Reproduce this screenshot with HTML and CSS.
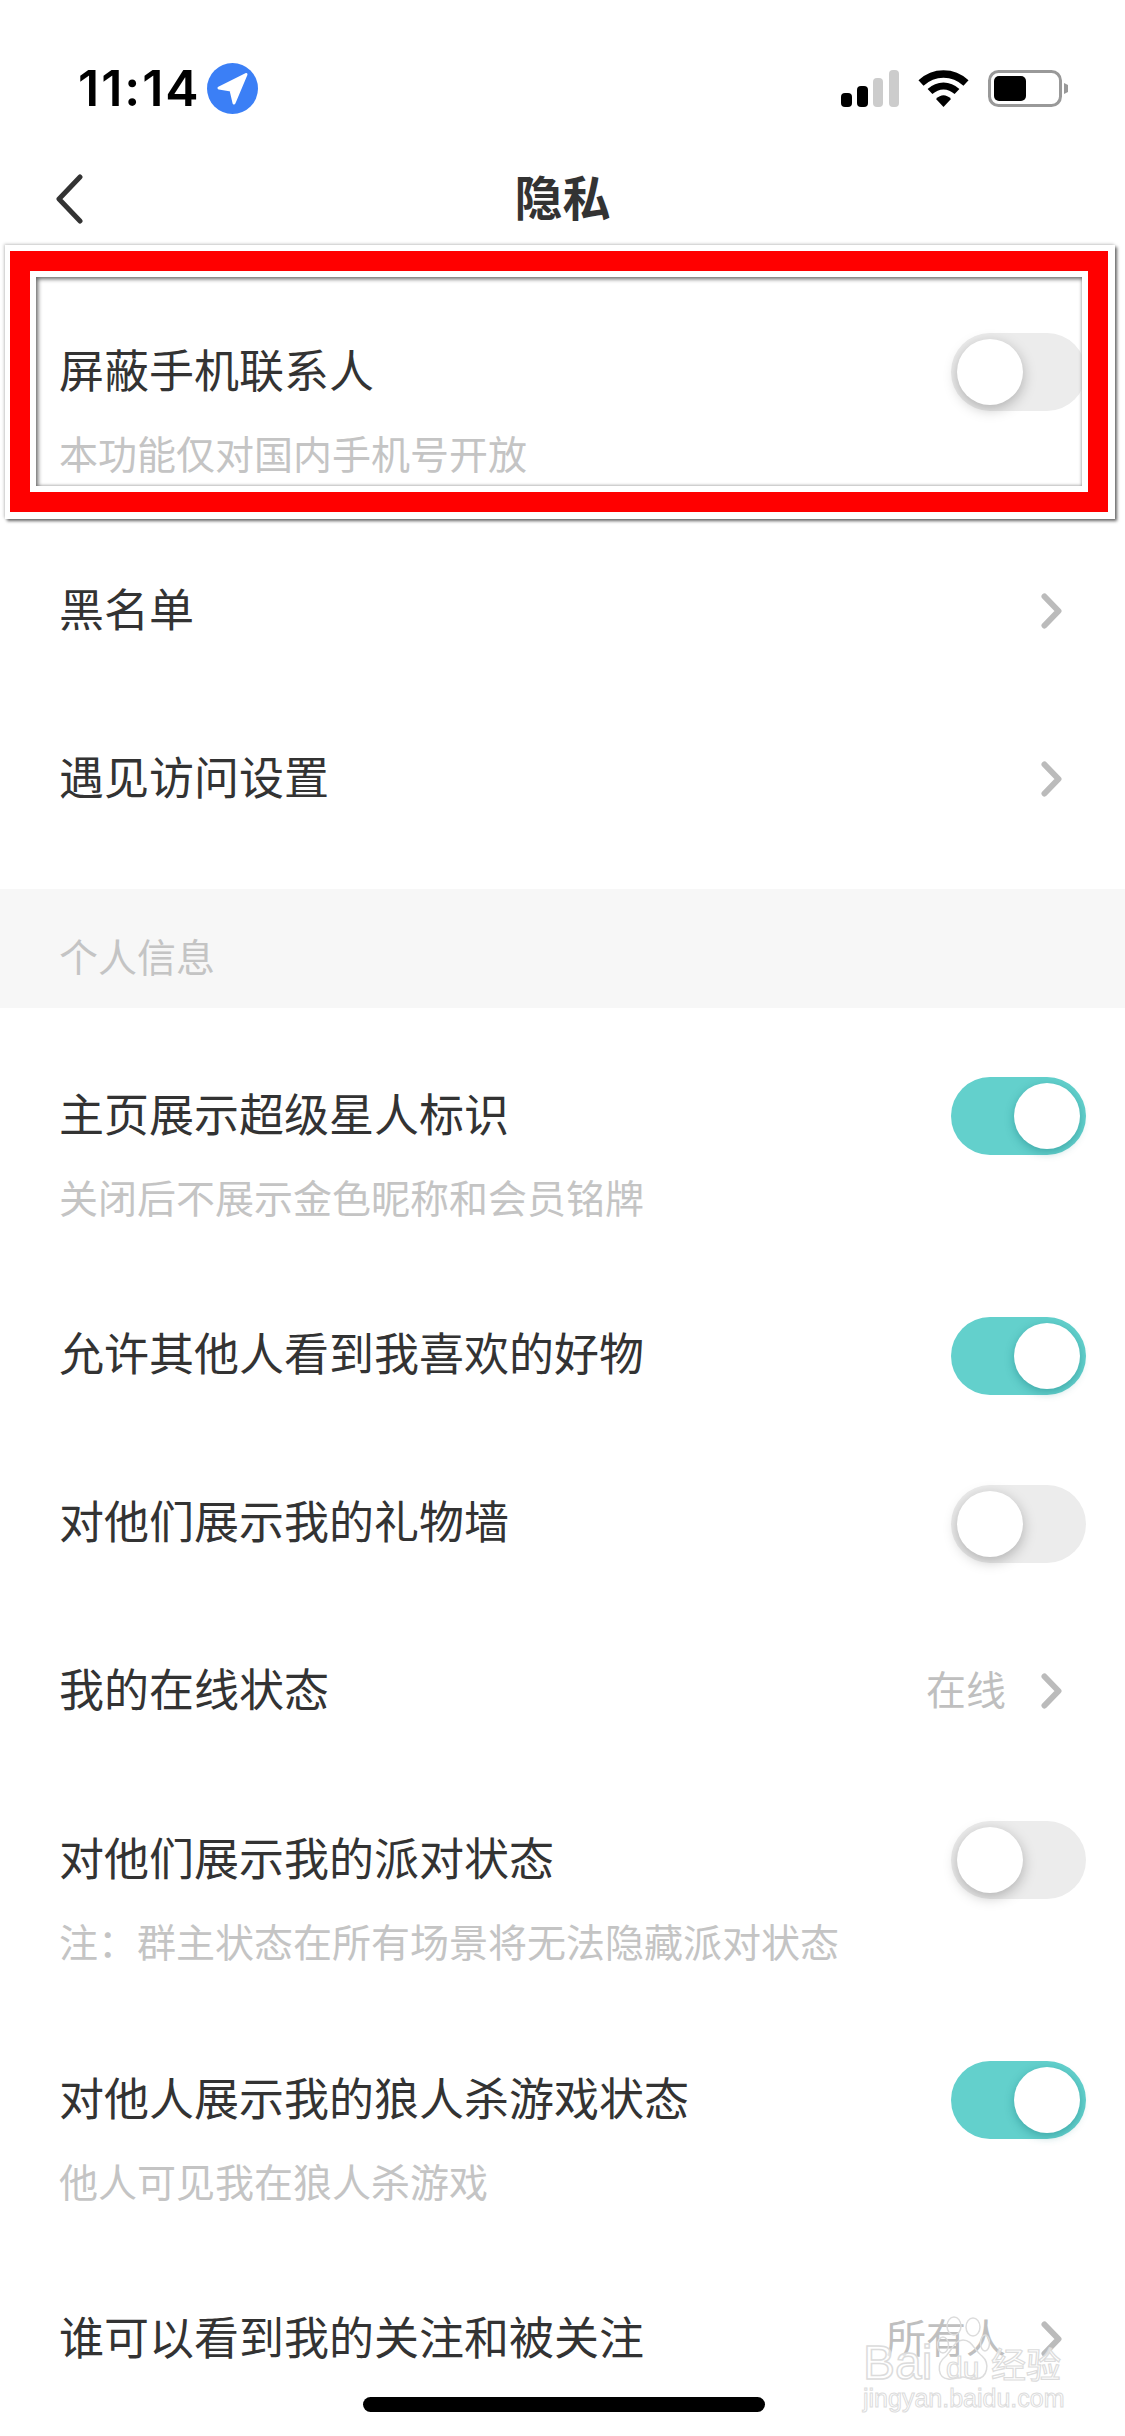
FILE: index.html
```html
<!DOCTYPE html>
<html lang="zh-CN">
<head>
    <meta charset="UTF-8">
    <meta name="viewport" content="width=device-width, initial-scale=1.0">
    <title>隐私</title>
    <link rel="stylesheet" href="styles.css">
</head>
<body>
    <div class="phone">
        <div class="status-bar">
            <div class="status-left">
                <span class="time">11:14</span>
                <svg class="loc" width="51" height="51" viewBox="0 0 51 51">
                    <circle cx="25.5" cy="25.5" r="25.5" fill="#3b7ff6"/>
                    <path d="M39 11.5 L12 25 L24 27 L27 40 Z" fill="#fff" stroke="#fff" stroke-width="3" stroke-linejoin="round"/>
                </svg>
            </div>
            <div class="status-right">
                <svg class="signal" width="58" height="37" viewBox="0 0 58 37">
                    <rect x="0" y="23" width="11" height="14" rx="4" fill="#000"/>
                    <rect x="16" y="16" width="11" height="21" rx="4" fill="#000"/>
                    <rect x="32" y="8" width="10" height="29" rx="4" fill="#ccc"/>
                    <rect x="48" y="0" width="10" height="37" rx="4" fill="#ccc"/>
                </svg>
                <svg class="wifi" width="51" height="37" viewBox="0 0 51 37">
                    <path d="M3 13 C16 1 35 1 48 13" fill="none" stroke="#000" stroke-width="7.5"/>
                    <path d="M12 21.5 C20 14 31 14 39 21.5" fill="none" stroke="#000" stroke-width="7"/>
                    <path d="M18 29 C23 24 28 24 33 29 L25.5 37 Z" fill="#000"/>
                </svg>
                <svg class="battery" width="80" height="37" viewBox="0 0 80 37">
                    <rect x="1.5" y="1.5" width="71" height="34" rx="9" fill="none" stroke="#999" stroke-width="3"/>
                    <rect x="6" y="6" width="32" height="25" rx="5" fill="#000"/>
                    <path d="M76 13 L80 15 L80 22 L76 24 Z" fill="#999"/>
                </svg>
            </div>
        </div>

        <div class="nav">
            <svg class="back" width="32" height="50" viewBox="0 0 32 50">
                <path d="M27 3 L6 25 L27 47" fill="none" stroke="#333" stroke-width="5" stroke-linecap="round" stroke-linejoin="round"/>
            </svg>
            <span class="nav-title">隐私</span>
        </div>

        <div class="group group-top">
            <div class="row row-tall">
                <div class="row-text">
                    <div class="row-title">屏蔽手机联系人</div>
                    <div class="row-sub">本功能仅对国内手机号开放</div>
                </div>
                <div class="switch"><i class="knob"></i></div>
            </div>
            <div class="row">
                <div class="row-title">黑名单</div>
                <svg class="chevron" width="21" height="36" viewBox="0 0 21 36"><path d="M3.5 3.5 L17.5 18 L3.5 32.5" fill="none" stroke="#bbb" stroke-width="6" stroke-linecap="round" stroke-linejoin="round"/></svg>
            </div>
            <div class="row">
                <div class="row-title">遇见访问设置</div>
                <svg class="chevron" width="21" height="36" viewBox="0 0 21 36"><path d="M3.5 3.5 L17.5 18 L3.5 32.5" fill="none" stroke="#bbb" stroke-width="6" stroke-linecap="round" stroke-linejoin="round"/></svg>
            </div>
        </div>

        <div class="section-head">个人信息</div>

        <div class="group group-info">
            <div class="row row-tall">
                <div class="row-text">
                    <div class="row-title">主页展示超级星人标识</div>
                    <div class="row-sub">关闭后不展示金色昵称和会员铭牌</div>
                </div>
                <div class="switch on"><i class="knob"></i></div>
            </div>
            <div class="row">
                <div class="row-title">允许其他人看到我喜欢的好物</div>
                <div class="switch on"><i class="knob"></i></div>
            </div>
            <div class="row">
                <div class="row-title">对他们展示我的礼物墙</div>
                <div class="switch"><i class="knob"></i></div>
            </div>
            <div class="row">
                <div class="row-title">我的在线状态</div>
                <div class="row-right">
                    <span class="row-value">在线</span>
                    <svg class="chevron" width="21" height="36" viewBox="0 0 21 36"><path d="M3.5 3.5 L17.5 18 L3.5 32.5" fill="none" stroke="#bbb" stroke-width="6" stroke-linecap="round" stroke-linejoin="round"/></svg>
                </div>
            </div>
            <div class="row row-tall">
                <div class="row-text">
                    <div class="row-title">对他们展示我的派对状态</div>
                    <div class="row-sub">注：群主状态在所有场景将无法隐藏派对状态</div>
                </div>
                <div class="switch"><i class="knob"></i></div>
            </div>
            <div class="row row-tall">
                <div class="row-text">
                    <div class="row-title">对他人展示我的狼人杀游戏状态</div>
                    <div class="row-sub">他人可见我在狼人杀游戏</div>
                </div>
                <div class="switch on"><i class="knob"></i></div>
            </div>
            <div class="row">
                <div class="row-title">谁可以看到我的关注和被关注</div>
                <div class="row-right">
                    <span class="row-value">所有人</span>
                    <svg class="chevron" width="21" height="36" viewBox="0 0 21 36"><path d="M3.5 3.5 L17.5 18 L3.5 32.5" fill="none" stroke="#bbb" stroke-width="6" stroke-linecap="round" stroke-linejoin="round"/></svg>
                </div>
            </div>
        </div>

        <!-- red annotation drawn over the first row -->
        <div class="mark"><div class="mark-red"><div class="mark-gap"><div class="mark-inner"></div></div></div></div>

        <div class="home-bar"></div>

        <!-- watermark -->
        <div class="watermark">
            <svg class="paw" width="54" height="66" viewBox="0 0 54 66">
                <g fill="none" stroke="#dcdcdc" stroke-width="1.5">
                    <ellipse cx="7" cy="29" rx="5.5" ry="8"/>
                    <ellipse cx="18" cy="10" rx="7" ry="9"/>
                    <ellipse cx="37" cy="11" rx="7" ry="9"/>
                    <ellipse cx="49" cy="27" rx="4.5" ry="8"/>
                    <path d="M27 24 C36 24 38 34 46 40 C54 47 52 62 40 63 C34 64 31 61 27 61 C22 61 18 64 12 63 C2 62 0 48 9 41 C16 35 18 24 27 24 Z"/>
                </g>
            </svg>
            <div class="wm-bai">Bai</div>
            <div class="wm-du">du</div>
            <div class="wm-jy">经验</div>
            <div class="wm-url">jingyan.baidu.com</div>
        </div>
    </div>
</body>
</html>
```

FILE: styles.css
```css
* {
    box-sizing: border-box;
}
body {
    margin: 0;
    background: #fff;
    font-family: "Noto Sans CJK SC", "Noto Sans", sans-serif;
    color: #333;
}
.phone {
    position: relative;
    width: 1125px;
    height: 2436px;
    overflow: hidden;
    background: #fff;
}

/* status bar */
.status-bar {
    display: flex;
    justify-content: space-between;
    align-items: center;
    height: 63px;
    margin-top: 57px;
    padding: 0 57px 0 78px;
}
.status-left {
    display: flex;
    align-items: center;
    gap: 6px;
}
.status-right {
    display: flex;
    align-items: center;
    gap: 19px;
}
.time {
    font-family: Inter, sans-serif;
    font-weight: 600;
    font-size: 50px;
    letter-spacing: 2px;
    line-height: 51px;
    color: #000;
}
.status-bar svg {
    display: block;
}

/* nav */
.nav {
    position: relative;
    display: flex;
    justify-content: center;
    align-items: center;
    height: 126px;
    margin-top: 15px;
    padding-bottom: 6px;
}
.back {
    position: absolute;
    left: 53px;
    top: 39px;
}
.nav-title {
    font-size: 48px;
    font-weight: 700;
    line-height: 60px;
}

/* rows */
.group-top {
    margin-top: 26px;
    padding-bottom: 26px;
}
.group-info {
    padding-top: 23px;
}
.row {
    display: flex;
    justify-content: space-between;
    align-items: center;
    height: 168px;
    padding: 0 39px 6px 59px;
}
.row-tall {
    height: 240px;
    align-items: flex-start;
    padding-bottom: 0;
}
.row-tall .row-text {
    padding-top: 52px;
}
.row-title {
    font-size: 45px;
    line-height: 60px;
}
.row-sub {
    margin-top: 26px;
    font-size: 39px;
    line-height: 54px;
    color: #c4c4c4;
}
.row-right {
    display: flex;
    align-items: center;
    gap: 35px;
}
.row-value {
    font-size: 40px;
    line-height: 54px;
    color: #bfbfbf;
}
.chevron {
    display: block;
    margin-top: 6px;
    margin-right: 24px;
}

/* switch */
.switch {
    position: relative;
    width: 135px;
    height: 78px;
    margin-top: 8px;
    border-radius: 39px;
    background: #ececec;
}
.row-tall .switch {
    margin-top: 46px;
}
.knob {
    position: absolute;
    top: 6px;
    left: 6px;
    width: 66px;
    height: 66px;
    border-radius: 50%;
    background: #fff;
    box-shadow: 0 4px 14px rgba(0, 0, 0, 0.26);
}
.switch.on {
    background: #63d0cc;
}
.switch.on .knob {
    left: 63px;
    box-shadow: 0 3px 10px rgba(20, 120, 125, 0.45);
}

/* section header */
.section-head {
    height: 119px;
    padding-left: 59px;
    background: #f7f7f7;
    font-size: 39px;
    line-height: 133px;
    color: #c4c4c4;
}

/* annotation */
.mark {
    position: absolute;
    left: 5px;
    top: 245px;
    width: 1110px;
    height: 274px;
    border-style: solid;
    border-color: #fff;
    border-width: 6px 7px 7px 5px;
    box-shadow: 2px 2px 3px #666, -1px -1px 3px #ccc;
}
.mark-red {
    height: 100%;
    border: 20px solid #f00;
}
.mark-gap {
    height: 100%;
    border: 6px solid #fff;
}
.mark-inner {
    height: 100%;
    box-shadow: inset 2px 2px 4px #666, inset -1px -1px 3px #ccc;
}

.home-bar {
    position: absolute;
    left: 363px;
    top: 2397px;
    width: 402px;
    height: 15px;
    border-radius: 8px;
    background: #000;
}

/* watermark */
.watermark {
    position: absolute;
    left: 860px;
    top: 2315px;
    width: 210px;
    height: 115px;
    font-family: "Liberation Sans", sans-serif;
    color: rgba(255, 255, 255, 0.65);
    white-space: nowrap;
}
.paw {
    position: absolute;
    left: 76px;
    top: 1px;
}
.wm-bai {
    position: absolute;
    left: 3px;
    top: 20px;
    font-size: 48px;
    line-height: 56px;
    -webkit-text-stroke: 1.5px #dcdcdc;
}
.wm-du {
    position: absolute;
    left: 86px;
    top: 36px;
    font-size: 30px;
    line-height: 34px;
    -webkit-text-stroke: 1.2px #dcdcdc;
}
.wm-jy {
    position: absolute;
    left: 131px;
    top: 26px;
    font-family: "Noto Sans CJK SC", sans-serif;
    font-size: 35px;
    line-height: 44px;
    -webkit-text-stroke: 1.2px #dcdcdc;
}
.wm-url {
    position: absolute;
    left: 3px;
    top: 68px;
    font-size: 25px;
    line-height: 30px;
    -webkit-text-stroke: 1px #dcdcdc;
}
```
